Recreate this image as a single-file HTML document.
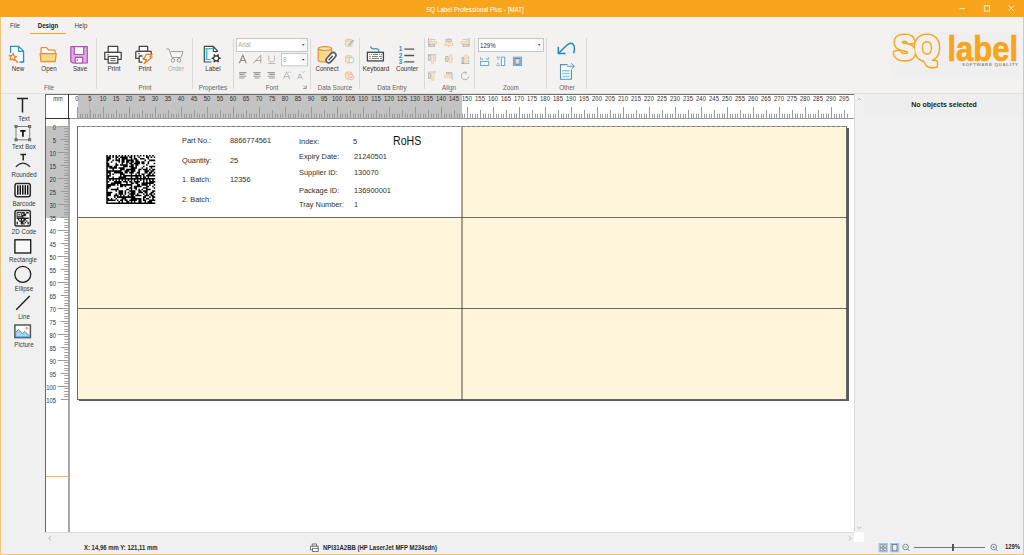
<!DOCTYPE html>
<html><head><meta charset="utf-8"><style>
html,body{margin:0;padding:0;}
body{width:1024px;height:555px;position:relative;overflow:hidden;background:#F0F0F0;font-family:"Liberation Sans",sans-serif;}
.t{position:absolute;white-space:pre;}
svg{overflow:visible}
</style></head><body>
<div style="position:absolute;left:0px;top:0px;width:1024px;height:17px;background:#F9A51B"></div><div class="t" style="left:375.3px;top:4.5px;width:200px;text-align:center;font-size:7.187px;line-height:10px;color:#fff;font-weight:400;transform-origin:50% 50%;transform:scaleX(0.8696);">SQ Label Professional Plus - [MAT]</div><svg style="position:absolute;left:955px;top:2px" width="66" height="14" viewBox="0 0 66 14">
<path d="M4.5 6.6h5.5" stroke="#fff" stroke-width="0.8" fill="none"/>
<rect x="29.3" y="3.8" width="5.3" height="5.3" stroke="#fff" stroke-width="0.8" fill="none"/>
<path d="M53.6 3.6l5.4 5.4M59 3.6l-5.4 5.4" stroke="#fff" stroke-width="0.8" fill="none"/>
</svg><div style="position:absolute;left:0px;top:17px;width:1px;height:538px;background:#F5C27A"></div><div style="position:absolute;left:1023px;top:17px;width:1px;height:538px;background:#F5C27A"></div><div style="position:absolute;left:0px;top:554px;width:1024px;height:1px;background:#F5C27A"></div><div style="position:absolute;left:1px;top:17px;width:1022px;height:76px;background:#F3F2F1"></div><div style="position:absolute;left:1px;top:93px;width:1022px;height:1px;background:#E3E1DF"></div><div class="t" style="left:-84.8px;top:20.6px;width:200px;text-align:center;font-size:7.312px;line-height:10px;color:#444;font-weight:400;transform-origin:50% 50%;transform:scaleX(0.8547);">File</div><div class="t" style="left:-52.1px;top:20.6px;width:200px;text-align:center;font-size:7.196px;line-height:10px;color:#222;font-weight:700;transform-origin:50% 50%;transform:scaleX(0.8547);">Design</div><div class="t" style="left:-19.200000000000003px;top:20.6px;width:200px;text-align:center;font-size:7.312px;line-height:10px;color:#444;font-weight:400;transform-origin:50% 50%;transform:scaleX(0.8547);">Help</div><div style="position:absolute;left:30px;top:32.5px;width:36px;height:1.6px;background:#F9A51B"></div><div style="position:absolute;left:96.0px;top:37.5px;width:1px;height:51px;background:#DCDAD8"></div><div style="position:absolute;left:192.0px;top:37.5px;width:1px;height:51px;background:#DCDAD8"></div><div style="position:absolute;left:233.0px;top:37.5px;width:1px;height:51px;background:#DCDAD8"></div><div style="position:absolute;left:309.8px;top:37.5px;width:1px;height:51px;background:#DCDAD8"></div><div style="position:absolute;left:358.8px;top:37.5px;width:1px;height:51px;background:#DCDAD8"></div><div style="position:absolute;left:424.1px;top:37.5px;width:1px;height:51px;background:#DCDAD8"></div><div style="position:absolute;left:474.1px;top:37.5px;width:1px;height:51px;background:#DCDAD8"></div><div style="position:absolute;left:545.7px;top:37.5px;width:1px;height:51px;background:#DCDAD8"></div><div style="position:absolute;left:585.7px;top:37.5px;width:1px;height:51px;background:#DCDAD8"></div><div class="t" style="left:-82.5px;top:63.8px;width:200px;text-align:center;font-size:7.312px;line-height:10px;color:#333;font-weight:400;transform-origin:50% 50%;transform:scaleX(0.8547);">New</div><div class="t" style="left:-51.3px;top:63.8px;width:200px;text-align:center;font-size:7.312px;line-height:10px;color:#333;font-weight:400;transform-origin:50% 50%;transform:scaleX(0.8547);">Open</div><div class="t" style="left:-20.200000000000003px;top:63.8px;width:200px;text-align:center;font-size:7.312px;line-height:10px;color:#333;font-weight:400;transform-origin:50% 50%;transform:scaleX(0.8547);">Save</div><div class="t" style="left:14px;top:63.8px;width:200px;text-align:center;font-size:7.312px;line-height:10px;color:#333;font-weight:400;transform-origin:50% 50%;transform:scaleX(0.8547);">Print</div><div class="t" style="left:44.80000000000001px;top:63.8px;width:200px;text-align:center;font-size:7.312px;line-height:10px;color:#333;font-weight:400;transform-origin:50% 50%;transform:scaleX(0.8547);">Print</div><div class="t" style="left:75.6px;top:63.8px;width:200px;text-align:center;font-size:7.312px;line-height:10px;color:#ABABAB;font-weight:400;transform-origin:50% 50%;transform:scaleX(0.8547);">Order</div><div class="t" style="left:113.4px;top:63.8px;width:200px;text-align:center;font-size:7.312px;line-height:10px;color:#333;font-weight:400;transform-origin:50% 50%;transform:scaleX(0.8547);">Label</div><div class="t" style="left:227px;top:63.8px;width:200px;text-align:center;font-size:7.312px;line-height:10px;color:#333;font-weight:400;transform-origin:50% 50%;transform:scaleX(0.8547);">Connect</div><div class="t" style="left:276px;top:63.8px;width:200px;text-align:center;font-size:7.312px;line-height:10px;color:#333;font-weight:400;transform-origin:50% 50%;transform:scaleX(0.8547);">Keyboard</div><div class="t" style="left:307px;top:63.8px;width:200px;text-align:center;font-size:7.312px;line-height:10px;color:#333;font-weight:400;transform-origin:50% 50%;transform:scaleX(0.8547);">Counter</div><div class="t" style="left:-50.8px;top:82.8px;width:200px;text-align:center;font-size:7.312px;line-height:10px;color:#666;font-weight:400;transform-origin:50% 50%;transform:scaleX(0.8547);">File</div><div class="t" style="left:44.900000000000006px;top:82.8px;width:200px;text-align:center;font-size:7.312px;line-height:10px;color:#666;font-weight:400;transform-origin:50% 50%;transform:scaleX(0.8547);">Print</div><div class="t" style="left:113px;top:82.8px;width:200px;text-align:center;font-size:7.312px;line-height:10px;color:#666;font-weight:400;transform-origin:50% 50%;transform:scaleX(0.8547);">Properties</div><div class="t" style="left:172px;top:82.8px;width:200px;text-align:center;font-size:7.312px;line-height:10px;color:#666;font-weight:400;transform-origin:50% 50%;transform:scaleX(0.8547);">Font</div><div class="t" style="left:235px;top:82.8px;width:200px;text-align:center;font-size:7.312px;line-height:10px;color:#666;font-weight:400;transform-origin:50% 50%;transform:scaleX(0.8547);">Data Source</div><div class="t" style="left:291.8px;top:82.8px;width:200px;text-align:center;font-size:7.312px;line-height:10px;color:#666;font-weight:400;transform-origin:50% 50%;transform:scaleX(0.8547);">Data Entry</div><div class="t" style="left:349.4px;top:82.8px;width:200px;text-align:center;font-size:7.312px;line-height:10px;color:#666;font-weight:400;transform-origin:50% 50%;transform:scaleX(0.8547);">Align</div><div class="t" style="left:410.8px;top:82.8px;width:200px;text-align:center;font-size:7.312px;line-height:10px;color:#666;font-weight:400;transform-origin:50% 50%;transform:scaleX(0.8547);">Zoom</div><div class="t" style="left:467px;top:82.8px;width:200px;text-align:center;font-size:7.312px;line-height:10px;color:#666;font-weight:400;transform-origin:50% 50%;transform:scaleX(0.8547);">Other</div><div style="position:absolute;left:891px;top:32px;width:128px;height:47px;background:#EFEFEF"></div><svg style="position:absolute;left:891px;top:30px" width="130" height="40" viewBox="0 0 130 40">
<text x="3.2" y="29.3" font-family="Liberation Sans" font-weight="700" font-size="33" fill="#F9A51B" stroke="#F9A51B" stroke-width="5.2" stroke-linejoin="round" textLength="45" lengthAdjust="spacingAndGlyphs">SQ</text>
<text x="3.2" y="29.3" font-family="Liberation Sans" font-weight="700" font-size="33" fill="#F1F0EF" stroke="#F1F0EF" stroke-width="2.2" stroke-linejoin="round" textLength="45" lengthAdjust="spacingAndGlyphs">SQ</text>
<text x="56.4" y="30.9" font-family="Liberation Sans" font-weight="700" font-size="35.7" fill="#F9A51B" stroke="#F9A51B" stroke-width="0.7" textLength="70.6" lengthAdjust="spacingAndGlyphs">label</text>
<text x="71" y="36.3" font-family="Liberation Sans" font-weight="700" font-size="4.4" fill="#8e8e8e" textLength="56" lengthAdjust="spacing">SOFTWARE QUALITY</text>
</svg><div class="t" style="left:-76.5px;top:113.8px;width:200px;text-align:center;font-size:7.254px;line-height:10px;color:#3a3a3a;font-weight:400;transform-origin:50% 50%;transform:scaleX(0.8547);">Text</div><div class="t" style="left:-76.3px;top:142.1px;width:200px;text-align:center;font-size:7.254px;line-height:10px;color:#3a3a3a;font-weight:400;transform-origin:50% 50%;transform:scaleX(0.8547);">Text Box</div><div class="t" style="left:-76.5px;top:170.2px;width:200px;text-align:center;font-size:7.254px;line-height:10px;color:#3a3a3a;font-weight:400;transform-origin:50% 50%;transform:scaleX(0.8547);">Rounded</div><div class="t" style="left:-76.3px;top:198.6px;width:200px;text-align:center;font-size:7.254px;line-height:10px;color:#3a3a3a;font-weight:400;transform-origin:50% 50%;transform:scaleX(0.8547);">Barcode</div><div class="t" style="left:-76.5px;top:226.7px;width:200px;text-align:center;font-size:7.254px;line-height:10px;color:#3a3a3a;font-weight:400;transform-origin:50% 50%;transform:scaleX(0.8547);">2D Code</div><div class="t" style="left:-76.6px;top:254.89999999999998px;width:200px;text-align:center;font-size:7.254px;line-height:10px;color:#3a3a3a;font-weight:400;transform-origin:50% 50%;transform:scaleX(0.8547);">Rectangle</div><div class="t" style="left:-76.3px;top:283.5px;width:200px;text-align:center;font-size:7.254px;line-height:10px;color:#3a3a3a;font-weight:400;transform-origin:50% 50%;transform:scaleX(0.8547);">Ellipse</div><div class="t" style="left:-76.5px;top:311.8px;width:200px;text-align:center;font-size:7.254px;line-height:10px;color:#3a3a3a;font-weight:400;transform-origin:50% 50%;transform:scaleX(0.8547);">Line</div><div class="t" style="left:-76px;top:340.2px;width:200px;text-align:center;font-size:7.254px;line-height:10px;color:#3a3a3a;font-weight:400;transform-origin:50% 50%;transform:scaleX(0.8547);">Picture</div><div style="position:absolute;left:45px;top:94px;width:24px;height:24px;background:#fff;border-top:1px solid #6d6d6d;border-left:1px solid #6d6d6d;box-sizing:border-box"></div><div style="position:absolute;left:68px;top:94px;width:1.5px;height:25px;background:#222"></div><div style="position:absolute;left:45px;top:117.5px;width:24.5px;height:1.5px;background:#222"></div><div class="t" style="left:-42.5px;top:93.8px;width:200px;text-align:center;font-size:6.552px;line-height:10px;color:#333;font-weight:400;transform-origin:50% 50%;transform:scaleX(0.8547);">mm</div><div style="position:absolute;left:69px;top:94px;width:785px;height:24px;background:#fff;border-top:1px solid #6d6d6d;box-sizing:border-box"></div><div style="position:absolute;left:77.5px;top:95px;width:384.8px;height:23px;background:#C3C3C3"></div><div style="position:absolute;left:89.4px;top:95px;width:1.1px;height:23px;background:rgba(240,165,50,0.75)"></div><svg style="position:absolute;left:0px;top:0px" width="1024" height="555" viewBox="0 0 1024 555"><path d="M77.50 107V118M80.50 113.7V118M82.50 113.7V118M85.50 113.7V118M87.50 113.7V118M90.50 110V118M93.50 113.7V118M95.50 113.7V118M98.50 113.7V118M100.50 113.7V118M103.50 107V118M106.50 113.7V118M108.50 113.7V118M111.50 113.7V118M113.50 113.7V118M116.50 110V118M119.50 113.7V118M121.50 113.7V118M124.50 113.7V118M126.50 113.7V118M129.50 107V118M132.50 113.7V118M134.50 113.7V118M137.50 113.7V118M139.50 113.7V118M142.50 110V118M145.50 113.7V118M147.50 113.7V118M150.50 113.7V118M152.50 113.7V118M155.50 107V118M158.50 113.7V118M160.50 113.7V118M163.50 113.7V118M165.50 113.7V118M168.50 110V118M171.50 113.7V118M173.50 113.7V118M176.50 113.7V118M178.50 113.7V118M181.50 107V118M184.50 113.7V118M186.50 113.7V118M189.50 113.7V118M191.50 113.7V118M194.50 110V118M197.50 113.7V118M199.50 113.7V118M202.50 113.7V118M204.50 113.7V118M207.50 107V118M210.50 113.7V118M212.50 113.7V118M215.50 113.7V118M217.50 113.7V118M220.50 110V118M223.50 113.7V118M225.50 113.7V118M228.50 113.7V118M230.50 113.7V118M233.50 107V118M236.50 113.7V118M238.50 113.7V118M241.50 113.7V118M243.50 113.7V118M246.50 110V118M249.50 113.7V118M251.50 113.7V118M254.50 113.7V118M256.50 113.7V118M259.50 107V118M262.50 113.7V118M264.50 113.7V118M267.50 113.7V118M269.50 113.7V118M272.50 110V118M275.50 113.7V118M277.50 113.7V118M280.50 113.7V118M282.50 113.7V118M285.50 107V118M288.50 113.7V118M290.50 113.7V118M293.50 113.7V118M295.50 113.7V118M298.50 110V118M301.50 113.7V118M303.50 113.7V118M306.50 113.7V118M308.50 113.7V118M311.50 107V118M314.50 113.7V118M316.50 113.7V118M319.50 113.7V118M321.50 113.7V118M324.50 110V118M327.50 113.7V118M329.50 113.7V118M332.50 113.7V118M334.50 113.7V118M337.50 107V118M340.50 113.7V118M342.50 113.7V118M345.50 113.7V118M347.50 113.7V118M350.50 110V118M353.50 113.7V118M355.50 113.7V118M358.50 113.7V118M360.50 113.7V118M363.50 107V118M366.50 113.7V118M368.50 113.7V118M371.50 113.7V118M373.50 113.7V118M376.50 110V118M379.50 113.7V118M381.50 113.7V118M384.50 113.7V118M386.50 113.7V118M389.50 107V118M392.50 113.7V118M394.50 113.7V118M397.50 113.7V118M399.50 113.7V118M402.50 110V118M405.50 113.7V118M407.50 113.7V118M410.50 113.7V118M412.50 113.7V118M415.50 107V118M418.50 113.7V118M420.50 113.7V118M423.50 113.7V118M425.50 113.7V118M428.50 110V118M431.50 113.7V118M433.50 113.7V118M436.50 113.7V118M438.50 113.7V118M441.50 107V118M444.50 113.7V118M446.50 113.7V118M449.50 113.7V118M451.50 113.7V118M454.50 110V118M457.50 113.7V118M459.50 113.7V118M462.50 113.7V118M464.50 113.7V118M467.50 107V118M470.50 113.7V118M472.50 113.7V118M475.50 113.7V118M477.50 113.7V118M480.50 110V118M483.50 113.7V118M485.50 113.7V118M488.50 113.7V118M490.50 113.7V118M493.50 107V118M496.50 113.7V118M498.50 113.7V118M501.50 113.7V118M503.50 113.7V118M506.50 110V118M509.50 113.7V118M511.50 113.7V118M514.50 113.7V118M516.50 113.7V118M519.50 107V118M522.50 113.7V118M524.50 113.7V118M527.50 113.7V118M529.50 113.7V118M532.50 110V118M535.50 113.7V118M537.50 113.7V118M540.50 113.7V118M542.50 113.7V118M545.50 107V118M548.50 113.7V118M550.50 113.7V118M553.50 113.7V118M555.50 113.7V118M558.50 110V118M561.50 113.7V118M563.50 113.7V118M566.50 113.7V118M568.50 113.7V118M571.50 107V118M574.50 113.7V118M576.50 113.7V118M579.50 113.7V118M581.50 113.7V118M584.50 110V118M587.50 113.7V118M589.50 113.7V118M592.50 113.7V118M594.50 113.7V118M597.50 107V118M600.50 113.7V118M602.50 113.7V118M605.50 113.7V118M607.50 113.7V118M610.50 110V118M613.50 113.7V118M615.50 113.7V118M618.50 113.7V118M620.50 113.7V118M623.50 107V118M626.50 113.7V118M628.50 113.7V118M631.50 113.7V118M633.50 113.7V118M636.50 110V118M639.50 113.7V118M641.50 113.7V118M644.50 113.7V118M646.50 113.7V118M649.50 107V118M652.50 113.7V118M654.50 113.7V118M657.50 113.7V118M659.50 113.7V118M662.50 110V118M665.50 113.7V118M667.50 113.7V118M670.50 113.7V118M672.50 113.7V118M675.50 107V118M678.50 113.7V118M680.50 113.7V118M683.50 113.7V118M685.50 113.7V118M688.50 110V118M691.50 113.7V118M693.50 113.7V118M696.50 113.7V118M698.50 113.7V118M701.50 107V118M704.50 113.7V118M706.50 113.7V118M709.50 113.7V118M711.50 113.7V118M714.50 110V118M717.50 113.7V118M719.50 113.7V118M722.50 113.7V118M724.50 113.7V118M727.50 107V118M730.50 113.7V118M732.50 113.7V118M735.50 113.7V118M737.50 113.7V118M740.50 110V118M743.50 113.7V118M745.50 113.7V118M748.50 113.7V118M750.50 113.7V118M753.50 107V118M756.50 113.7V118M758.50 113.7V118M761.50 113.7V118M763.50 113.7V118M766.50 110V118M769.50 113.7V118M771.50 113.7V118M774.50 113.7V118M776.50 113.7V118M779.50 107V118M782.50 113.7V118M784.50 113.7V118M787.50 113.7V118M789.50 113.7V118M792.50 110V118M795.50 113.7V118M797.50 113.7V118M800.50 113.7V118M802.50 113.7V118M805.50 107V118M808.50 113.7V118M810.50 113.7V118M813.50 113.7V118M815.50 113.7V118M818.50 110V118M821.50 113.7V118M823.50 113.7V118M826.50 113.7V118M828.50 113.7V118M831.50 107V118M834.50 113.7V118M836.50 113.7V118M839.50 113.7V118M841.50 113.7V118M844.50 110V118M847.50 113.7V118" stroke="#9c9c9c" stroke-width="1" fill="none"/></svg><div style="position:absolute;left:69px;top:117.5px;width:785px;height:1px;background:#9a9a9a"></div><div class="t" style="left:-23.200000000000003px;top:93.6px;width:200px;text-align:center;font-size:6.785px;line-height:10px;color:#333;font-weight:400;transform-origin:50% 50%;transform:scaleX(0.8696);">0</div><div class="t" style="left:-10.200000000000003px;top:93.6px;width:200px;text-align:center;font-size:6.785px;line-height:10px;color:#333;font-weight:400;transform-origin:50% 50%;transform:scaleX(0.8696);">5</div><div class="t" style="left:2.799999999999997px;top:93.6px;width:200px;text-align:center;font-size:6.785px;line-height:10px;color:#333;font-weight:400;transform-origin:50% 50%;transform:scaleX(0.8696);">10</div><div class="t" style="left:15.799999999999997px;top:93.6px;width:200px;text-align:center;font-size:6.785px;line-height:10px;color:#333;font-weight:400;transform-origin:50% 50%;transform:scaleX(0.8696);">15</div><div class="t" style="left:28.80000000000001px;top:93.6px;width:200px;text-align:center;font-size:6.785px;line-height:10px;color:#333;font-weight:400;transform-origin:50% 50%;transform:scaleX(0.8696);">20</div><div class="t" style="left:41.80000000000001px;top:93.6px;width:200px;text-align:center;font-size:6.785px;line-height:10px;color:#333;font-weight:400;transform-origin:50% 50%;transform:scaleX(0.8696);">25</div><div class="t" style="left:54.80000000000001px;top:93.6px;width:200px;text-align:center;font-size:6.785px;line-height:10px;color:#333;font-weight:400;transform-origin:50% 50%;transform:scaleX(0.8696);">30</div><div class="t" style="left:67.80000000000001px;top:93.6px;width:200px;text-align:center;font-size:6.785px;line-height:10px;color:#333;font-weight:400;transform-origin:50% 50%;transform:scaleX(0.8696);">35</div><div class="t" style="left:80.80000000000001px;top:93.6px;width:200px;text-align:center;font-size:6.785px;line-height:10px;color:#333;font-weight:400;transform-origin:50% 50%;transform:scaleX(0.8696);">40</div><div class="t" style="left:93.80000000000001px;top:93.6px;width:200px;text-align:center;font-size:6.785px;line-height:10px;color:#333;font-weight:400;transform-origin:50% 50%;transform:scaleX(0.8696);">45</div><div class="t" style="left:106.80000000000001px;top:93.6px;width:200px;text-align:center;font-size:6.785px;line-height:10px;color:#333;font-weight:400;transform-origin:50% 50%;transform:scaleX(0.8696);">50</div><div class="t" style="left:119.80000000000001px;top:93.6px;width:200px;text-align:center;font-size:6.785px;line-height:10px;color:#333;font-weight:400;transform-origin:50% 50%;transform:scaleX(0.8696);">55</div><div class="t" style="left:132.8px;top:93.6px;width:200px;text-align:center;font-size:6.785px;line-height:10px;color:#333;font-weight:400;transform-origin:50% 50%;transform:scaleX(0.8696);">60</div><div class="t" style="left:145.8px;top:93.6px;width:200px;text-align:center;font-size:6.785px;line-height:10px;color:#333;font-weight:400;transform-origin:50% 50%;transform:scaleX(0.8696);">65</div><div class="t" style="left:158.8px;top:93.6px;width:200px;text-align:center;font-size:6.785px;line-height:10px;color:#333;font-weight:400;transform-origin:50% 50%;transform:scaleX(0.8696);">70</div><div class="t" style="left:171.8px;top:93.6px;width:200px;text-align:center;font-size:6.785px;line-height:10px;color:#333;font-weight:400;transform-origin:50% 50%;transform:scaleX(0.8696);">75</div><div class="t" style="left:184.8px;top:93.6px;width:200px;text-align:center;font-size:6.785px;line-height:10px;color:#333;font-weight:400;transform-origin:50% 50%;transform:scaleX(0.8696);">80</div><div class="t" style="left:197.8px;top:93.6px;width:200px;text-align:center;font-size:6.785px;line-height:10px;color:#333;font-weight:400;transform-origin:50% 50%;transform:scaleX(0.8696);">85</div><div class="t" style="left:210.8px;top:93.6px;width:200px;text-align:center;font-size:6.785px;line-height:10px;color:#333;font-weight:400;transform-origin:50% 50%;transform:scaleX(0.8696);">90</div><div class="t" style="left:223.8px;top:93.6px;width:200px;text-align:center;font-size:6.785px;line-height:10px;color:#333;font-weight:400;transform-origin:50% 50%;transform:scaleX(0.8696);">95</div><div class="t" style="left:236.8px;top:93.6px;width:200px;text-align:center;font-size:6.785px;line-height:10px;color:#333;font-weight:400;transform-origin:50% 50%;transform:scaleX(0.8696);">100</div><div class="t" style="left:249.8px;top:93.6px;width:200px;text-align:center;font-size:6.785px;line-height:10px;color:#333;font-weight:400;transform-origin:50% 50%;transform:scaleX(0.8696);">105</div><div class="t" style="left:262.8px;top:93.6px;width:200px;text-align:center;font-size:6.785px;line-height:10px;color:#333;font-weight:400;transform-origin:50% 50%;transform:scaleX(0.8696);">110</div><div class="t" style="left:275.8px;top:93.6px;width:200px;text-align:center;font-size:6.785px;line-height:10px;color:#333;font-weight:400;transform-origin:50% 50%;transform:scaleX(0.8696);">115</div><div class="t" style="left:288.8px;top:93.6px;width:200px;text-align:center;font-size:6.785px;line-height:10px;color:#333;font-weight:400;transform-origin:50% 50%;transform:scaleX(0.8696);">120</div><div class="t" style="left:301.8px;top:93.6px;width:200px;text-align:center;font-size:6.785px;line-height:10px;color:#333;font-weight:400;transform-origin:50% 50%;transform:scaleX(0.8696);">125</div><div class="t" style="left:314.8px;top:93.6px;width:200px;text-align:center;font-size:6.785px;line-height:10px;color:#333;font-weight:400;transform-origin:50% 50%;transform:scaleX(0.8696);">130</div><div class="t" style="left:327.8px;top:93.6px;width:200px;text-align:center;font-size:6.785px;line-height:10px;color:#333;font-weight:400;transform-origin:50% 50%;transform:scaleX(0.8696);">135</div><div class="t" style="left:340.8px;top:93.6px;width:200px;text-align:center;font-size:6.785px;line-height:10px;color:#333;font-weight:400;transform-origin:50% 50%;transform:scaleX(0.8696);">140</div><div class="t" style="left:353.8px;top:93.6px;width:200px;text-align:center;font-size:6.785px;line-height:10px;color:#333;font-weight:400;transform-origin:50% 50%;transform:scaleX(0.8696);">145</div><div class="t" style="left:366.8px;top:93.6px;width:200px;text-align:center;font-size:6.785px;line-height:10px;color:#333;font-weight:400;transform-origin:50% 50%;transform:scaleX(0.8696);">150</div><div class="t" style="left:379.8px;top:93.6px;width:200px;text-align:center;font-size:6.785px;line-height:10px;color:#333;font-weight:400;transform-origin:50% 50%;transform:scaleX(0.8696);">155</div><div class="t" style="left:392.8px;top:93.6px;width:200px;text-align:center;font-size:6.785px;line-height:10px;color:#333;font-weight:400;transform-origin:50% 50%;transform:scaleX(0.8696);">160</div><div class="t" style="left:405.8px;top:93.6px;width:200px;text-align:center;font-size:6.785px;line-height:10px;color:#333;font-weight:400;transform-origin:50% 50%;transform:scaleX(0.8696);">165</div><div class="t" style="left:418.79999999999995px;top:93.6px;width:200px;text-align:center;font-size:6.785px;line-height:10px;color:#333;font-weight:400;transform-origin:50% 50%;transform:scaleX(0.8696);">170</div><div class="t" style="left:431.79999999999995px;top:93.6px;width:200px;text-align:center;font-size:6.785px;line-height:10px;color:#333;font-weight:400;transform-origin:50% 50%;transform:scaleX(0.8696);">175</div><div class="t" style="left:444.79999999999995px;top:93.6px;width:200px;text-align:center;font-size:6.785px;line-height:10px;color:#333;font-weight:400;transform-origin:50% 50%;transform:scaleX(0.8696);">180</div><div class="t" style="left:457.79999999999995px;top:93.6px;width:200px;text-align:center;font-size:6.785px;line-height:10px;color:#333;font-weight:400;transform-origin:50% 50%;transform:scaleX(0.8696);">185</div><div class="t" style="left:470.79999999999995px;top:93.6px;width:200px;text-align:center;font-size:6.785px;line-height:10px;color:#333;font-weight:400;transform-origin:50% 50%;transform:scaleX(0.8696);">190</div><div class="t" style="left:483.79999999999995px;top:93.6px;width:200px;text-align:center;font-size:6.785px;line-height:10px;color:#333;font-weight:400;transform-origin:50% 50%;transform:scaleX(0.8696);">195</div><div class="t" style="left:496.79999999999995px;top:93.6px;width:200px;text-align:center;font-size:6.785px;line-height:10px;color:#333;font-weight:400;transform-origin:50% 50%;transform:scaleX(0.8696);">200</div><div class="t" style="left:509.79999999999995px;top:93.6px;width:200px;text-align:center;font-size:6.785px;line-height:10px;color:#333;font-weight:400;transform-origin:50% 50%;transform:scaleX(0.8696);">205</div><div class="t" style="left:522.8px;top:93.6px;width:200px;text-align:center;font-size:6.785px;line-height:10px;color:#333;font-weight:400;transform-origin:50% 50%;transform:scaleX(0.8696);">210</div><div class="t" style="left:535.8px;top:93.6px;width:200px;text-align:center;font-size:6.785px;line-height:10px;color:#333;font-weight:400;transform-origin:50% 50%;transform:scaleX(0.8696);">215</div><div class="t" style="left:548.8px;top:93.6px;width:200px;text-align:center;font-size:6.785px;line-height:10px;color:#333;font-weight:400;transform-origin:50% 50%;transform:scaleX(0.8696);">220</div><div class="t" style="left:561.8px;top:93.6px;width:200px;text-align:center;font-size:6.785px;line-height:10px;color:#333;font-weight:400;transform-origin:50% 50%;transform:scaleX(0.8696);">225</div><div class="t" style="left:574.8px;top:93.6px;width:200px;text-align:center;font-size:6.785px;line-height:10px;color:#333;font-weight:400;transform-origin:50% 50%;transform:scaleX(0.8696);">230</div><div class="t" style="left:587.8px;top:93.6px;width:200px;text-align:center;font-size:6.785px;line-height:10px;color:#333;font-weight:400;transform-origin:50% 50%;transform:scaleX(0.8696);">235</div><div class="t" style="left:600.8px;top:93.6px;width:200px;text-align:center;font-size:6.785px;line-height:10px;color:#333;font-weight:400;transform-origin:50% 50%;transform:scaleX(0.8696);">240</div><div class="t" style="left:613.8px;top:93.6px;width:200px;text-align:center;font-size:6.785px;line-height:10px;color:#333;font-weight:400;transform-origin:50% 50%;transform:scaleX(0.8696);">245</div><div class="t" style="left:626.8px;top:93.6px;width:200px;text-align:center;font-size:6.785px;line-height:10px;color:#333;font-weight:400;transform-origin:50% 50%;transform:scaleX(0.8696);">250</div><div class="t" style="left:639.8px;top:93.6px;width:200px;text-align:center;font-size:6.785px;line-height:10px;color:#333;font-weight:400;transform-origin:50% 50%;transform:scaleX(0.8696);">255</div><div class="t" style="left:652.8px;top:93.6px;width:200px;text-align:center;font-size:6.785px;line-height:10px;color:#333;font-weight:400;transform-origin:50% 50%;transform:scaleX(0.8696);">260</div><div class="t" style="left:665.8px;top:93.6px;width:200px;text-align:center;font-size:6.785px;line-height:10px;color:#333;font-weight:400;transform-origin:50% 50%;transform:scaleX(0.8696);">265</div><div class="t" style="left:678.8px;top:93.6px;width:200px;text-align:center;font-size:6.785px;line-height:10px;color:#333;font-weight:400;transform-origin:50% 50%;transform:scaleX(0.8696);">270</div><div class="t" style="left:691.8px;top:93.6px;width:200px;text-align:center;font-size:6.785px;line-height:10px;color:#333;font-weight:400;transform-origin:50% 50%;transform:scaleX(0.8696);">275</div><div class="t" style="left:704.8px;top:93.6px;width:200px;text-align:center;font-size:6.785px;line-height:10px;color:#333;font-weight:400;transform-origin:50% 50%;transform:scaleX(0.8696);">280</div><div class="t" style="left:717.8px;top:93.6px;width:200px;text-align:center;font-size:6.785px;line-height:10px;color:#333;font-weight:400;transform-origin:50% 50%;transform:scaleX(0.8696);">285</div><div class="t" style="left:730.8px;top:93.6px;width:200px;text-align:center;font-size:6.785px;line-height:10px;color:#333;font-weight:400;transform-origin:50% 50%;transform:scaleX(0.8696);">290</div><div class="t" style="left:743.8px;top:93.6px;width:200px;text-align:center;font-size:6.785px;line-height:10px;color:#333;font-weight:400;transform-origin:50% 50%;transform:scaleX(0.8696);">295</div><div style="position:absolute;left:45px;top:118px;width:24px;height:414px;background:#fff"></div><div style="position:absolute;left:45px;top:126.3px;width:24px;height:91.3px;background:#C3C3C3"></div><div style="position:absolute;left:45px;top:118px;width:1.2px;height:414.5px;background:#666"></div><div style="position:absolute;left:68.4px;top:118px;width:1.4px;height:414.5px;background:#A8A8A8"></div><svg style="position:absolute;left:0px;top:0px" width="1024" height="555" viewBox="0 0 1024 555"><path d="M57.6 126.50H69M64.3 128.50H69M64.3 131.50H69M64.3 134.50H69M64.3 136.50H69M60.7 139.50H69M64.3 141.50H69M64.3 144.50H69M64.3 147.50H69M64.3 149.50H69M57.6 152.50H69M64.3 154.50H69M64.3 157.50H69M64.3 160.50H69M64.3 162.50H69M60.7 165.50H69M64.3 167.50H69M64.3 170.50H69M64.3 173.50H69M64.3 175.50H69M57.6 178.50H69M64.3 180.50H69M64.3 183.50H69M64.3 186.50H69M64.3 188.50H69M60.7 191.50H69M64.3 193.50H69M64.3 196.50H69M64.3 199.50H69M64.3 201.50H69M57.6 204.50H69M64.3 206.50H69M64.3 209.50H69M64.3 212.50H69M64.3 214.50H69M60.7 217.50H69M64.3 219.50H69M64.3 222.50H69M64.3 225.50H69M64.3 227.50H69M57.6 230.50H69M64.3 232.50H69M64.3 235.50H69M64.3 238.50H69M64.3 240.50H69M60.7 243.50H69M64.3 245.50H69M64.3 248.50H69M64.3 251.50H69M64.3 253.50H69M57.6 256.50H69M64.3 258.50H69M64.3 261.50H69M64.3 264.50H69M64.3 266.50H69M60.7 269.50H69M64.3 271.50H69M64.3 274.50H69M64.3 277.50H69M64.3 279.50H69M57.6 282.50H69M64.3 284.50H69M64.3 287.50H69M64.3 290.50H69M64.3 292.50H69M60.7 295.50H69M64.3 297.50H69M64.3 300.50H69M64.3 303.50H69M64.3 305.50H69M57.6 308.50H69M64.3 310.50H69M64.3 313.50H69M64.3 316.50H69M64.3 318.50H69M60.7 321.50H69M64.3 323.50H69M64.3 326.50H69M64.3 329.50H69M64.3 331.50H69M57.6 334.50H69M64.3 336.50H69M64.3 339.50H69M64.3 342.50H69M64.3 344.50H69M60.7 347.50H69M64.3 349.50H69M64.3 352.50H69M64.3 355.50H69M64.3 357.50H69M57.6 360.50H69M64.3 362.50H69M64.3 365.50H69M64.3 368.50H69M64.3 370.50H69M60.7 373.50H69M64.3 375.50H69M64.3 378.50H69M64.3 381.50H69M64.3 383.50H69M57.6 386.50H69M64.3 388.50H69M64.3 391.50H69M64.3 394.50H69M64.3 396.50H69M60.7 399.50H69" stroke="#9c9c9c" stroke-width="1" fill="none"/></svg><div class="t" style="left:-144px;top:122.5px;width:200px;text-align:right;font-size:6.785px;line-height:10px;color:#333;font-weight:400;transform-origin:100% 50%;transform:scaleX(0.8696);">0</div><div class="t" style="left:-144px;top:135.5px;width:200px;text-align:right;font-size:6.785px;line-height:10px;color:#333;font-weight:400;transform-origin:100% 50%;transform:scaleX(0.8696);">5</div><div class="t" style="left:-144px;top:148.5px;width:200px;text-align:right;font-size:6.785px;line-height:10px;color:#333;font-weight:400;transform-origin:100% 50%;transform:scaleX(0.8696);">10</div><div class="t" style="left:-144px;top:161.5px;width:200px;text-align:right;font-size:6.785px;line-height:10px;color:#333;font-weight:400;transform-origin:100% 50%;transform:scaleX(0.8696);">15</div><div class="t" style="left:-144px;top:174.5px;width:200px;text-align:right;font-size:6.785px;line-height:10px;color:#333;font-weight:400;transform-origin:100% 50%;transform:scaleX(0.8696);">20</div><div class="t" style="left:-144px;top:187.5px;width:200px;text-align:right;font-size:6.785px;line-height:10px;color:#333;font-weight:400;transform-origin:100% 50%;transform:scaleX(0.8696);">25</div><div class="t" style="left:-144px;top:200.5px;width:200px;text-align:right;font-size:6.785px;line-height:10px;color:#333;font-weight:400;transform-origin:100% 50%;transform:scaleX(0.8696);">30</div><div class="t" style="left:-144px;top:213.5px;width:200px;text-align:right;font-size:6.785px;line-height:10px;color:#333;font-weight:400;transform-origin:100% 50%;transform:scaleX(0.8696);">35</div><div class="t" style="left:-144px;top:226.5px;width:200px;text-align:right;font-size:6.785px;line-height:10px;color:#333;font-weight:400;transform-origin:100% 50%;transform:scaleX(0.8696);">40</div><div class="t" style="left:-144px;top:239.5px;width:200px;text-align:right;font-size:6.785px;line-height:10px;color:#333;font-weight:400;transform-origin:100% 50%;transform:scaleX(0.8696);">45</div><div class="t" style="left:-144px;top:252.5px;width:200px;text-align:right;font-size:6.785px;line-height:10px;color:#333;font-weight:400;transform-origin:100% 50%;transform:scaleX(0.8696);">50</div><div class="t" style="left:-144px;top:265.5px;width:200px;text-align:right;font-size:6.785px;line-height:10px;color:#333;font-weight:400;transform-origin:100% 50%;transform:scaleX(0.8696);">55</div><div class="t" style="left:-144px;top:278.5px;width:200px;text-align:right;font-size:6.785px;line-height:10px;color:#333;font-weight:400;transform-origin:100% 50%;transform:scaleX(0.8696);">60</div><div class="t" style="left:-144px;top:291.5px;width:200px;text-align:right;font-size:6.785px;line-height:10px;color:#333;font-weight:400;transform-origin:100% 50%;transform:scaleX(0.8696);">65</div><div class="t" style="left:-144px;top:304.5px;width:200px;text-align:right;font-size:6.785px;line-height:10px;color:#333;font-weight:400;transform-origin:100% 50%;transform:scaleX(0.8696);">70</div><div class="t" style="left:-144px;top:317.5px;width:200px;text-align:right;font-size:6.785px;line-height:10px;color:#333;font-weight:400;transform-origin:100% 50%;transform:scaleX(0.8696);">75</div><div class="t" style="left:-144px;top:330.5px;width:200px;text-align:right;font-size:6.785px;line-height:10px;color:#333;font-weight:400;transform-origin:100% 50%;transform:scaleX(0.8696);">80</div><div class="t" style="left:-144px;top:343.5px;width:200px;text-align:right;font-size:6.785px;line-height:10px;color:#333;font-weight:400;transform-origin:100% 50%;transform:scaleX(0.8696);">85</div><div class="t" style="left:-144px;top:356.5px;width:200px;text-align:right;font-size:6.785px;line-height:10px;color:#333;font-weight:400;transform-origin:100% 50%;transform:scaleX(0.8696);">90</div><div class="t" style="left:-144px;top:369.5px;width:200px;text-align:right;font-size:6.785px;line-height:10px;color:#333;font-weight:400;transform-origin:100% 50%;transform:scaleX(0.8696);">95</div><div class="t" style="left:-144px;top:382.5px;width:200px;text-align:right;font-size:6.785px;line-height:10px;color:#333;font-weight:400;transform-origin:100% 50%;transform:scaleX(0.8696);">100</div><div class="t" style="left:-144px;top:395.5px;width:200px;text-align:right;font-size:6.785px;line-height:10px;color:#333;font-weight:400;transform-origin:100% 50%;transform:scaleX(0.8696);">105</div><div style="position:absolute;left:46px;top:476px;width:22.5px;height:1px;background:#EDB461"></div><div style="position:absolute;left:68.2px;top:94px;width:1.3px;height:25px;background:#333"></div><div style="position:absolute;left:45px;top:117.6px;width:24.5px;height:1.3px;background:#333"></div><div style="position:absolute;left:70px;top:119px;width:784px;height:413px;background:#fff"></div><div style="position:absolute;left:854px;top:94px;width:1px;height:438px;background:#DCDCDC"></div><div style="position:absolute;left:77.5px;top:126.3px;width:769.6px;height:273.0px;background:#FFF5DA"></div><div style="position:absolute;left:77.5px;top:126.3px;width:384.8px;height:91px;background:#fff"></div><div style="position:absolute;left:77px;top:125.9px;width:770px;height:1.5px;background:repeating-linear-gradient(90deg,#7a7a7a 0 3px,#a8a8a8 3px 5px)"></div><div style="position:absolute;left:77px;top:126px;width:1.3px;height:274px;background:#6a6a6a"></div><div style="position:absolute;left:846.3px;top:126px;width:1.2px;height:274px;background:#666"></div><div style="position:absolute;left:847.3px;top:128px;width:1.4px;height:273.4px;background:#5c5c5c"></div><div style="position:absolute;left:77px;top:399px;width:770.5px;height:1.2px;background:#666"></div><div style="position:absolute;left:79px;top:400px;width:769.7px;height:1.4px;background:#5c5c5c"></div><div style="position:absolute;left:461.2px;top:127px;width:1.8px;height:273px;background:rgba(70,66,55,0.48)"></div><div style="position:absolute;left:78px;top:216.9px;width:769px;height:1.6px;background:rgba(60,60,60,0.75)"></div><div style="position:absolute;left:78px;top:307.9px;width:769px;height:1.6px;background:rgba(60,60,60,0.75)"></div><div class="t" style="left:181.6px;top:136.20000000000002px;font-size:7.844px;line-height:10px;color:#2e2e2e;font-weight:400;transform-origin:0 50%;transform:scaleX(0.9434);">Part No.:</div><div class="t" style="left:229.8px;top:136.20000000000002px;font-size:7.844px;line-height:10px;color:#2e2e2e;font-weight:400;transform-origin:0 50%;transform:scaleX(0.9434);">8866774561</div><div class="t" style="left:181.6px;top:155.60000000000002px;font-size:7.844px;line-height:10px;color:#2e2e2e;font-weight:400;transform-origin:0 50%;transform:scaleX(0.9434);">Quantity:</div><div class="t" style="left:229.8px;top:155.60000000000002px;font-size:7.844px;line-height:10px;color:#2e2e2e;font-weight:400;transform-origin:0 50%;transform:scaleX(0.9434);">25</div><div class="t" style="left:181.6px;top:175.3px;font-size:7.844px;line-height:10px;color:#2e2e2e;font-weight:400;transform-origin:0 50%;transform:scaleX(0.9434);">1. Batch:</div><div class="t" style="left:229.8px;top:175.3px;font-size:7.844px;line-height:10px;color:#2e2e2e;font-weight:400;transform-origin:0 50%;transform:scaleX(0.9434);">12356</div><div class="t" style="left:181.6px;top:194.9px;font-size:7.844px;line-height:10px;color:#2e2e2e;font-weight:400;transform-origin:0 50%;transform:scaleX(0.9434);">2. Batch:</div><div class="t" style="left:298.6px;top:136.70000000000002px;font-size:7.844px;line-height:10px;color:#2e2e2e;font-weight:400;transform-origin:0 50%;transform:scaleX(0.9434);">Index:</div><div class="t" style="left:353.3px;top:136.70000000000002px;font-size:7.844px;line-height:10px;color:#2e2e2e;font-weight:400;transform-origin:0 50%;transform:scaleX(0.9434);">5</div><div class="t" style="left:298.6px;top:152.3px;font-size:7.844px;line-height:10px;color:#2e2e2e;font-weight:400;transform-origin:0 50%;transform:scaleX(0.9434);">Expiry Date:</div><div class="t" style="left:353.6px;top:152.3px;font-size:7.844px;line-height:10px;color:#2e2e2e;font-weight:400;transform-origin:0 50%;transform:scaleX(0.9434);">21240501</div><div class="t" style="left:298.6px;top:168.10000000000002px;font-size:7.844px;line-height:10px;color:#2e2e2e;font-weight:400;transform-origin:0 50%;transform:scaleX(0.9434);">Supplier ID:</div><div class="t" style="left:353.6px;top:168.10000000000002px;font-size:7.844px;line-height:10px;color:#2e2e2e;font-weight:400;transform-origin:0 50%;transform:scaleX(0.9434);">130070</div><div class="t" style="left:298.6px;top:185.5px;font-size:7.844px;line-height:10px;color:#2e2e2e;font-weight:400;transform-origin:0 50%;transform:scaleX(0.9434);">Package ID:</div><div class="t" style="left:353.6px;top:185.5px;font-size:7.844px;line-height:10px;color:#2e2e2e;font-weight:400;transform-origin:0 50%;transform:scaleX(0.9434);">136900001</div><div class="t" style="left:299.4px;top:199.5px;font-size:7.844px;line-height:10px;color:#2e2e2e;font-weight:400;transform-origin:0 50%;transform:scaleX(0.9434);">Tray Number:</div><div class="t" style="left:353.6px;top:199.5px;font-size:7.844px;line-height:10px;color:#2e2e2e;font-weight:400;transform-origin:0 50%;transform:scaleX(0.9434);">1</div><div class="t" style="left:393.3px;top:135.7px;font-size:12.201px;line-height:10px;color:#111;font-weight:400;transform-origin:0 50%;transform:scaleX(0.8696);">RoHS</div><svg style="position:absolute;left:105.8px;top:154.9px" width="49.5" height="49" viewBox="0 0 32 32"><path d="M0 0h1v1h-1zM2 0h1v1h-1zM4 0h1v1h-1zM6 0h1v1h-1zM8 0h1v1h-1zM10 0h1v1h-1zM12 0h1v1h-1zM14 0h1v1h-1zM16 0h1v1h-1zM18 0h1v1h-1zM20 0h1v1h-1zM22 0h1v1h-1zM24 0h1v1h-1zM26 0h1v1h-1zM28 0h1v1h-1zM30 0h1v1h-1zM0 1h3v1h-3zM4 1h1v1h-1zM6 1h2v1h-2zM9 1h5v1h-5zM15 1h2v1h-2zM18 1h1v1h-1zM21 1h1v1h-1zM26 1h2v1h-2zM29 1h1v1h-1zM31 1h1v1h-1zM0 2h3v1h-3zM6 2h1v1h-1zM8 2h1v1h-1zM10 2h4v1h-4zM16 2h1v1h-1zM18 2h2v1h-2zM22 2h3v1h-3zM27 2h1v1h-1zM0 3h2v1h-2zM4 3h1v1h-1zM6 3h3v1h-3zM10 3h2v1h-2zM13 3h5v1h-5zM19 3h2v1h-2zM25 3h1v1h-1zM28 3h4v1h-4zM0 4h1v1h-1zM3 4h1v1h-1zM8 4h1v1h-1zM10 4h2v1h-2zM13 4h2v1h-2zM16 4h2v1h-2zM19 4h3v1h-3zM23 4h2v1h-2zM27 4h1v1h-1zM0 5h2v1h-2zM6 5h1v1h-1zM10 5h1v1h-1zM13 5h1v1h-1zM15 5h2v1h-2zM18 5h4v1h-4zM23 5h2v1h-2zM27 5h1v1h-1zM31 5h1v1h-1zM0 6h2v1h-2zM6 6h2v1h-2zM9 6h5v1h-5zM16 6h2v1h-2zM19 6h2v1h-2zM26 6h1v1h-1zM0 7h4v1h-4zM5 7h2v1h-2zM11 7h3v1h-3zM15 7h3v1h-3zM19 7h1v1h-1zM24 7h1v1h-1zM28 7h4v1h-4zM0 8h1v1h-1zM2 8h5v1h-5zM8 8h4v1h-4zM16 8h4v1h-4zM23 8h1v1h-1zM26 8h1v1h-1zM29 8h1v1h-1zM0 9h1v1h-1zM4 9h1v1h-1zM9 9h3v1h-3zM13 9h6v1h-6zM21 9h2v1h-2zM24 9h3v1h-3zM28 9h1v1h-1zM30 9h2v1h-2zM0 10h10v1h-10zM12 10h3v1h-3zM16 10h3v1h-3zM21 10h1v1h-1zM25 10h3v1h-3zM29 10h2v1h-2zM0 11h3v1h-3zM5 11h6v1h-6zM12 11h2v1h-2zM15 11h3v1h-3zM20 11h2v1h-2zM25 11h2v1h-2zM28 11h2v1h-2zM31 11h1v1h-1zM0 12h1v1h-1zM2 12h1v1h-1zM4 12h1v1h-1zM9 12h3v1h-3zM16 12h1v1h-1zM19 12h1v1h-1zM21 12h1v1h-1zM23 12h2v1h-2zM27 12h2v1h-2zM30 12h1v1h-1zM0 13h3v1h-3zM9 13h1v1h-1zM11 13h12v1h-12zM24 13h1v1h-1zM26 13h6v1h-6zM0 14h2v1h-2zM4 14h1v1h-1zM8 14h5v1h-5zM16 14h1v1h-1zM19 14h2v1h-2zM22 14h1v1h-1zM24 14h2v1h-2zM27 14h1v1h-1zM0 15h32v1h-32zM0 16h1v1h-1zM2 16h1v1h-1zM4 16h1v1h-1zM6 16h1v1h-1zM8 16h1v1h-1zM10 16h1v1h-1zM12 16h1v1h-1zM14 16h1v1h-1zM16 16h1v1h-1zM18 16h1v1h-1zM20 16h1v1h-1zM22 16h1v1h-1zM24 16h1v1h-1zM26 16h1v1h-1zM28 16h1v1h-1zM30 16h1v1h-1zM0 17h2v1h-2zM5 17h5v1h-5zM11 17h3v1h-3zM15 17h2v1h-2zM18 17h4v1h-4zM24 17h1v1h-1zM26 17h1v1h-1zM28 17h4v1h-4zM0 18h1v1h-1zM3 18h7v1h-7zM13 18h1v1h-1zM16 18h2v1h-2zM19 18h2v1h-2zM23 18h8v1h-8zM0 19h6v1h-6zM7 19h1v1h-1zM9 19h8v1h-8zM20 19h2v1h-2zM23 19h4v1h-4zM28 19h1v1h-1zM31 19h1v1h-1zM0 20h3v1h-3zM9 20h2v1h-2zM12 20h1v1h-1zM16 20h1v1h-1zM18 20h5v1h-5zM26 20h2v1h-2zM30 20h1v1h-1zM0 21h2v1h-2zM7 21h1v1h-1zM15 21h2v1h-2zM18 21h2v1h-2zM24 21h3v1h-3zM31 21h1v1h-1zM0 22h1v1h-1zM3 22h5v1h-5zM13 22h2v1h-2zM16 22h1v1h-1zM19 22h1v1h-1zM21 22h1v1h-1zM23 22h1v1h-1zM26 22h3v1h-3zM0 23h1v1h-1zM6 23h1v1h-1zM8 23h3v1h-3zM12 23h1v1h-1zM15 23h4v1h-4zM21 23h2v1h-2zM24 23h3v1h-3zM30 23h2v1h-2zM0 24h4v1h-4zM8 24h3v1h-3zM12 24h1v1h-1zM14 24h1v1h-1zM16 24h3v1h-3zM21 24h3v1h-3zM25 24h2v1h-2zM29 24h2v1h-2zM0 25h3v1h-3zM6 25h1v1h-1zM8 25h3v1h-3zM12 25h1v1h-1zM15 25h4v1h-4zM20 25h1v1h-1zM24 25h1v1h-1zM26 25h1v1h-1zM28 25h2v1h-2zM31 25h1v1h-1zM0 26h3v1h-3zM5 26h3v1h-3zM9 26h1v1h-1zM11 26h1v1h-1zM14 26h1v1h-1zM16 26h2v1h-2zM19 26h4v1h-4zM25 26h3v1h-3zM29 26h2v1h-2zM0 27h1v1h-1zM5 27h1v1h-1zM7 27h12v1h-12zM24 27h2v1h-2zM28 27h1v1h-1zM30 27h2v1h-2zM0 28h2v1h-2zM3 28h1v1h-1zM6 28h1v1h-1zM10 28h3v1h-3zM16 28h7v1h-7zM24 28h1v1h-1zM26 28h2v1h-2zM30 28h1v1h-1zM0 29h6v1h-6zM7 29h1v1h-1zM9 29h2v1h-2zM12 29h2v1h-2zM15 29h5v1h-5zM21 29h2v1h-2zM24 29h2v1h-2zM28 29h4v1h-4zM0 30h1v1h-1zM8 30h1v1h-1zM10 30h1v1h-1zM13 30h2v1h-2zM16 30h1v1h-1zM18 30h1v1h-1zM21 30h2v1h-2zM25 30h1v1h-1zM27 30h3v1h-3zM0 31h32v1h-32z" fill="#000"/></svg><div style="position:absolute;left:45px;top:532px;width:809px;height:12px;background:#F0F0F0"></div><div style="position:absolute;left:45px;top:532px;width:810px;height:1px;background:#DCDCDC"></div><div style="position:absolute;left:854px;top:532px;width:9.5px;height:10px;background:#fff"></div><div style="position:absolute;left:864px;top:94px;width:159px;height:19.5px;background:#EEEEEE"></div><div class="t" style="left:843.7px;top:99.5px;width:200px;text-align:center;font-size:8.050px;line-height:10px;color:#222;font-weight:700;transform-origin:50% 50%;transform:scaleX(0.8696);">No objects selected</div><div class="t" style="left:83.5px;top:542.9px;font-size:6.985px;line-height:10px;color:#2a2a2a;font-weight:700;transform-origin:0 50%;transform:scaleX(0.8547);">X: 14,96 mm Y: 121,11 mm</div><div class="t" style="left:322.5px;top:542.8px;font-size:6.985px;line-height:10px;color:#2a2a2a;font-weight:700;transform-origin:0 50%;transform:scaleX(0.8547);">NPI31A2BB (HP LaserJet MFP M234sdn)</div><div class="t" style="left:1004.6px;top:542.2px;font-size:7.080px;line-height:10px;color:#2a2a2a;font-weight:700;transform-origin:0 50%;transform:scaleX(0.8333);">129%</div><div style="position:absolute;left:914px;top:547px;width:70.7px;height:0.8px;background:#777"></div><div style="position:absolute;left:951.8px;top:544px;width:2px;height:7px;background:#555"></div><svg style="position:absolute;left:0px;top:0px" width="1024" height="555" viewBox="0 0 1024 555"><g transform="translate(6,42)" fill="none" stroke="#2D8ED6" stroke-width="1.3"><path d="M4.6 11V4.3H12.5L17.6 9.3V20H13.5" fill="#fff"/><path d="M12.5 4.3V9.3H17.6"/><path d="M4.6 11L4.6 20H13.5" stroke="none" fill="#fff"/></g><polygon points="13.28,53.36 13.89,55.95 16.46,56.66 14.19,58.05 14.31,60.71 12.29,58.97 9.79,59.91 10.82,57.45 9.16,55.37 11.81,55.58" fill="#fff" stroke="#EE8230" stroke-width="1.2" stroke-linejoin="round"/><path d="M14.6 59.3L17.9 62.8" stroke="#EE8230" stroke-width="1.4"/><g transform="translate(36,42)" stroke="#EE8A3A" stroke-width="1.25" stroke-linejoin="round"><path d="M5 11.5V6.2Q5 5.5 5.7 5.5H10.3L12.6 8H18.4Q19.1 8 19.1 8.7V11.5" fill="#fff"/><path d="M4.1 11.6H20.2L19.2 19.6H5.1Z" fill="#F6D88B"/></g><g transform="translate(67,42)" stroke="#B14FB9" stroke-width="1.2" stroke-linejoin="round"><path d="M3.8 4.7H20.3V21H5.6L3.8 19.3Z" fill="#DFADE2"/><rect x="7.3" y="4.7" width="9.4" height="7.8" fill="#fff"/><rect x="8.3" y="15.3" width="7.3" height="5.7" fill="#fff"/><path d="M10.3 17.3V19" stroke="#444" stroke-width="0.9"/></g><g transform="translate(101,42)" stroke="#454545" stroke-width="1.3" stroke-linejoin="round" fill="#fff"><rect x="7.2" y="4.4" width="9.6" height="6"/><rect x="3.8" y="10.4" width="16.4" height="7"/><rect x="7.2" y="14.4" width="9.6" height="6.8"/><path d="M9.3 16.5H14.7M9.3 18.7H14.7" stroke-width="0.9"/><path d="M6 12.6H7.8" stroke="#2D8ED6" stroke-width="1.1"/></g><g transform="translate(132,42)" stroke="#454545" stroke-width="1.3" stroke-linejoin="round" fill="#fff"><rect x="7.2" y="4.4" width="8.4" height="5"/><path d="M3.8 9.4H19.2V12M11.5 16.4H3.8V9.4"/><path d="M10.5 14H7.2V20.1H10.5"/><path d="M6 11.6H7.8" stroke="#2D8ED6" stroke-width="1.1"/></g><path d="M146.4 54.3H152.3L149.6 57H152.3L144.2 63.6L146.7 59.5H143.6Z" fill="#fff" stroke="#EE7F22" stroke-width="1.2" stroke-linejoin="round"/><g transform="translate(163,42)" stroke="#9C9C9C" stroke-width="1" fill="none" stroke-linejoin="round"><path d="M3.4 7H5.9L9 15.6H18L20 9.6H7.9" fill="#F7F7F7"/><circle cx="9.9" cy="18.3" r="1.8"/><circle cx="16" cy="18.3" r="1.8"/></g><g transform="translate(201,42)" stroke-linejoin="round"><path d="M10.5 20H3.3V4.4H12.3L16.8 9.5" fill="#fff" stroke="#444" stroke-width="1.2"/><path d="M12.3 4.4V9.5H16.8" fill="none" stroke="#444" stroke-width="1.1"/><path d="M4.4 6.6H12M4.4 17.6H9.8" stroke="#3CC0D9" stroke-width="1.3"/><path d="M5.6 6.4V18" stroke="#3CC0D9" stroke-width="1.8"/><path d="M14.4 10.4L15.2 11" stroke="#3CC0D9" stroke-width="1.2"/></g><polygon points="219.40,57.50 220.74,57.58 220.74,59.02 219.40,59.10 218.49,60.67 219.09,61.87 217.85,62.59 217.11,61.47 215.29,61.47 214.55,62.59 213.31,61.87 213.91,60.67 213.00,59.10 211.66,59.02 211.66,57.58 213.00,57.50 213.91,55.93 213.31,54.73 214.55,54.01 215.29,55.13 217.11,55.13 217.85,54.01 219.09,54.73 218.49,55.93" fill="#333"/><circle cx="216.2" cy="58.3" r="1.9" fill="#fff"/><g transform="translate(314,42)" stroke="#EE8A3A" stroke-width="1.2"><path d="M4.2 6.6V18.2Q4.2 20 10.9 20Q17.6 20 17.6 18.2V6.6" fill="#F7D98D"/><ellipse cx="10.9" cy="6.6" rx="6.7" ry="1.9" fill="#F9E4B0"/></g><g transform="translate(331,57.6) rotate(-48)"><rect x="-6" y="-2.7" width="12" height="5.4" rx="2.7" fill="#fff" stroke="#5a5a5a" stroke-width="1.6"/><path d="M-3.5 0H2.5" stroke="#555" stroke-width="1.5"/></g><g transform="translate(345,38.5)" stroke="#F2C08A" stroke-width="1"><path d="M0.6 1.7V6.8Q0.6 7.8 3.8 7.8Q7 7.8 7 6.8V1.7" fill="#F9E6C2"/><ellipse cx="3.8" cy="1.7" rx="3.2" ry="1" fill="#FBEBD0"/></g><g transform="translate(345,55)" stroke="#F2C08A" stroke-width="1"><path d="M0.6 1.7V6.8Q0.6 7.8 3.8 7.8Q7 7.8 7 6.8V1.7" fill="#F9E6C2"/><ellipse cx="3.8" cy="1.7" rx="3.2" ry="1" fill="#FBEBD0"/></g><g transform="translate(345,71.3)" stroke="#F2C08A" stroke-width="1"><path d="M0.6 1.7V6.8Q0.6 7.8 3.8 7.8Q7 7.8 7 6.8V1.7" fill="#F9E6C2"/><ellipse cx="3.8" cy="1.7" rx="3.2" ry="1" fill="#FBEBD0"/></g><path d="M348.5 45.3L353.7 40.2" stroke="#8FC1E8" stroke-width="1.8"/><path d="M353.6 59.3A2.4 2.4 0 1 1 352.3 58" fill="#fff" stroke="#9ED9E4" stroke-width="1.1"/><path d="M352 57L353.6 58.2L352.3 59.6" fill="none" stroke="#9ED9E4" stroke-width="0.9"/><circle cx="351.2" cy="77.2" r="2.6" fill="#fff" stroke="#F4AAB4" stroke-width="1"/><path d="M349.7 77.2H352.7" stroke="#F09AA6" stroke-width="1.2"/><g transform="translate(363,42)"><rect x="4.4" y="10.3" width="16" height="8.6" fill="#fff" stroke="#444" stroke-width="1.3"/><path d="M6.2 12.4h1M8 12.4h1M10 12.4h5M16 12.4h1M18 12.4h1.2M6.2 14.4h1.6M9 14.4h6M16.2 14.4h2.8M6.2 16.4h1.4M8.6 16.4h7.4M17 16.4h2" stroke="#666" stroke-width="0.9"/><path d="M7.5 4.4Q8.3 7.3 11 6.9Q15.8 5.6 16 10.2" fill="none" stroke="#3A93D3" stroke-width="1.3"/></g><g transform="translate(395,42)"><path d="M9.3 7.1H19.2M9.3 13.5H19.2M9.3 19.8H19.2" stroke="#555" stroke-width="1.3"/><text x="5.6" y="9.2" font-family="Liberation Sans" font-weight="700" font-size="6.4" fill="#2B8BD2" text-anchor="middle">1</text><text x="5.6" y="15.6" font-family="Liberation Sans" font-weight="700" font-size="6.4" fill="#2B8BD2" text-anchor="middle">2</text><text x="5.6" y="21.9" font-family="Liberation Sans" font-weight="700" font-size="6.4" fill="#2B8BD2" text-anchor="middle">3</text></g><rect x="236.5" y="38.5" width="71" height="13" fill="#fff" stroke="#C6C6C6" stroke-width="1"/><rect x="299.5" y="39" width="7.5" height="12" fill="#F7F7F7"/><path d="M301.8 44.3H304.6L303.2 45.8Z" fill="#333"/><rect x="281.5" y="53.5" width="26" height="12.3" fill="#fff" stroke="#C6C6C6" stroke-width="1"/><rect x="299.5" y="54" width="7.5" height="11.3" fill="#F7F7F7"/><path d="M301.8 58.9H304.6L303.2 60.4Z" fill="#333"/><path d="M239.3 63.3L242.8 55.2L246.3 63.3M240.6 60.5H245" fill="none" stroke="#8C8C8C" stroke-width="1.2"/><path d="M253.3 63.3L260.8 55.2V63.3M255.6 60.6H260.8" fill="none" stroke="#9A9A9A" stroke-width="0.9"/><path d="M268.8 55.5V60.3Q268.8 62 271.7 62Q274.6 62 274.6 60.3V55.5M268.3 63.5H275.2" fill="none" stroke="#B4B4B4" stroke-width="0.9"/><path d="M239.2 72.6H246.4M239.2 74.4H244.6M239.2 76.2H246.4M239.2 78H244.6" stroke="#9E9E9E" stroke-width="1.1"/><path d="M253.3 72.6H260.7M254.4 74.4H259.6M253.3 76.2H260.7M254.4 78H259.6" stroke="#9E9E9E" stroke-width="1.1"/><path d="M267.5 72.6H274.9M269.3 74.4H274.9M267.5 76.2H274.9M269.3 78H274.9" stroke="#9E9E9E" stroke-width="1.1"/><path d="M283.3 79.3L286.6 71.8L289.9 79.3M284.5 76.6H288.7" fill="none" stroke="#A8A8A8" stroke-width="0.8"/><path d="M288.4 72.9L289.6 71.7L290.8 72.9" fill="none" stroke="#8FC4EA" stroke-width="0.8"/><path d="M297.3 79.3L299.9 73.8L302.5 79.3M298.3 77.3H301.5" fill="none" stroke="#A8A8A8" stroke-width="0.8"/><path d="M302.2 71.4L303.4 72.6L304.6 71.4" fill="none" stroke="#8FC4EA" stroke-width="0.8"/><path d="M303.3 88.5H306.3V85.5" fill="none" stroke="#777" stroke-width="0.8"/><path d="M303.5 85.7L305.5 87.7" stroke="#777" stroke-width="0.7"/><path d="M428.7 38V46.8" stroke="#B0B0B0" stroke-width="1"/><rect x="429.2" y="41.4" width="7.6" height="2.4" fill="#FBE3C2" stroke="#F8CFA0" stroke-width="0.8"/><rect x="429.2" y="44.6" width="5.5" height="1.8" fill="#ddd" stroke="#B0B0B0" stroke-width="0.7"/><path d="M430.5 39.6H435.5M431.7 38.6L430.6 39.6L431.7 40.6" fill="none" stroke="#9CC8EC" stroke-width="0.8"/><path d="M448.8 38V47" stroke="#B0B0B0" stroke-width="0.8"/><rect x="446" y="39.2" width="5.5" height="2.2" fill="#ddd" stroke="#B0B0B0" stroke-width="0.7"/><rect x="444.8" y="43" width="8" height="2.6" fill="#FBE3C2" stroke="#F8CFA0" stroke-width="0.8"/><path d="M469 38V46.8" stroke="#B0B0B0" stroke-width="1"/><rect x="461" y="41.4" width="7.6" height="2.4" fill="#FBE3C2" stroke="#F8CFA0" stroke-width="0.8"/><rect x="463" y="44.6" width="5.5" height="1.8" fill="#ddd" stroke="#B0B0B0" stroke-width="0.7"/><path d="M462.3 39.6H467.3M466.1 38.6L467.2 39.6L466.1 40.6" fill="none" stroke="#9CC8EC" stroke-width="0.8"/><path d="M428 54.9H436.3" stroke="#B0B0B0" stroke-width="1"/><rect x="428.4" y="55.6" width="1.8" height="5" fill="#ddd" stroke="#B0B0B0" stroke-width="0.7"/><rect x="431.3" y="55.6" width="2.4" height="7.6" fill="#FBE3C2" stroke="#F8CFA0" stroke-width="0.8"/><path d="M435.2 56.5V61.5M434.2 57.6L435.2 56.5L436.2 57.6" fill="none" stroke="#9CC8EC" stroke-width="0.8"/><path d="M444.5 59H453" stroke="#B0B0B0" stroke-width="0.8"/><rect x="445.8" y="56.4" width="2.2" height="5.2" fill="#ddd" stroke="#B0B0B0" stroke-width="0.7"/><rect x="449.3" y="54.9" width="2.6" height="8" fill="#FBE3C2" stroke="#F8CFA0" stroke-width="0.8"/><path d="M461.3 63.5H469.6" stroke="#B0B0B0" stroke-width="1"/><rect x="462" y="57.3" width="1.8" height="5.6" fill="#ddd" stroke="#B0B0B0" stroke-width="0.7"/><rect x="464.8" y="55" width="2.4" height="8" fill="#FBE3C2" stroke="#F8CFA0" stroke-width="0.8"/><path d="M468.6 56V62M467.6 61L468.6 62L469.6 61" fill="none" stroke="#9CC8EC" stroke-width="0.8"/><rect x="428.6" y="73" width="1.8" height="5.5" fill="#ddd" stroke="#B0B0B0" stroke-width="0.7"/><rect x="431.5" y="73.2" width="2.4" height="7" fill="#FBE3C2" stroke="#F8CFA0" stroke-width="0.8"/><path d="M428.5 72H435.5M434.6 71L435.6 72L434.6 73" fill="none" stroke="#9CC8EC" stroke-width="0.8"/><rect x="446.5" y="72.3" width="5" height="1.8" fill="#ddd" stroke="#B0B0B0" stroke-width="0.7"/><rect x="444.8" y="75.2" width="6.6" height="2.4" fill="#FBE3C2" stroke="#F8CFA0" stroke-width="0.8"/><path d="M452.3 73V79.5M451.3 78.5L452.3 79.5L453.3 78.5" fill="none" stroke="#9CC8EC" stroke-width="0.8"/><path d="M468.6 76.6A3.6 3.6 0 1 1 466 72.6" fill="none" stroke="#A8A8A8" stroke-width="0.9"/><path d="M465.3 71.3L466.7 72.6L465.3 73.9" fill="none" stroke="#A8A8A8" stroke-width="0.8"/><rect x="478.5" y="38.5" width="65" height="13" fill="#fff" stroke="#C6C6C6" stroke-width="1"/><rect x="535.5" y="39" width="7.5" height="12" fill="#F7F7F7"/><path d="M537.8 44.3H540.6L539.2 45.8Z" fill="#333"/><g stroke="#5FAAE0" stroke-width="1" fill="#fff"><rect x="480.5" y="61.5" width="8.2" height="4"/><rect x="501.4" y="57.2" width="3.3" height="8.3"/></g><path d="M480.6 57V59.8M488.6 57V59.8M496.3 57.2H500M496.3 65.4H500" stroke="#999" stroke-width="0.8"/><path d="M481.4 59.1H483M486.2 59.1H487.8M498.1 58.2V59.8M498.1 62.8V64.5" stroke="#5FAAE0" stroke-width="1.1"/><rect x="513.4" y="57.2" width="8.2" height="8.3" fill="#A8D2EE" stroke="#5FAAE0" stroke-width="1"/><rect x="515" y="58.6" width="5" height="5.6" fill="#ddd" stroke="#777" stroke-width="0.9"/><path d="M558.6 53.2L566.5 45.5Q571.6 41.3 573.8 45.3Q575.2 48.3 573.6 53.3M558.3 46.7V53.6H565.6" fill="none" stroke="#1F89C9" stroke-width="1.5" stroke-linejoin="round"/><path d="M567.6 64.6H560.5V79.2H571.4V69.8" fill="#fff" stroke="#5F8FAD" stroke-width="1.1"/><path d="M562.3 70.8H569.6M562.3 73.6H569.6M562.3 76.5H569.6" stroke="#7FCBEE" stroke-width="1.5"/><path d="M567 66.3H574.3M571.2 63.3L574.3 66.3L571.2 69.3" fill="none" stroke="#4F9ED6" stroke-width="1"/><path d="M17 98.4H28M22.5 98.4V112.6" stroke="#222" stroke-width="1.5"/><path d="M16 126.5H29.7V139.8H16Z" fill="none" stroke="#666" stroke-width="0.8"/><rect x="14.9" y="125.4" width="2.2" height="2.2" fill="#888" stroke="#555" stroke-width="0.7"/><rect x="28.599999999999998" y="125.4" width="2.2" height="2.2" fill="#888" stroke="#555" stroke-width="0.7"/><rect x="14.9" y="138.70000000000002" width="2.2" height="2.2" fill="#888" stroke="#555" stroke-width="0.7"/><rect x="28.599999999999998" y="138.70000000000002" width="2.2" height="2.2" fill="#888" stroke="#555" stroke-width="0.7"/><path d="M20.2 130.8H25.6M22.9 130.8V136.7" stroke="#111" stroke-width="1.7"/><path d="M20.4 154.6H26M23.2 154.6V160.6" stroke="#222" stroke-width="1.5"/><path d="M15.8 166.8Q23 159.4 30.2 166.8" fill="none" stroke="#333" stroke-width="1.1"/><rect x="15" y="183.4" width="15.3" height="13.3" rx="2.2" fill="#fff" stroke="#2a2a2a" stroke-width="1.5"/><path d="M17.8 185.3V194.8M20.3 185.3V194.8M22.8 185.3V194.8M25.3 185.3V194.8M27.7 185.3V194.8" stroke="#111" stroke-width="1.5"/><rect x="15" y="210.5" width="15.3" height="15.5" rx="1.5" fill="#fff" stroke="#2a2a2a" stroke-width="1.5"/><path d="M22.00 212.10h1.35v1.38h-1.35zM23.35 212.10h1.35v1.38h-1.35zM26.05 212.10h1.35v1.38h-1.35zM27.40 212.10h1.35v1.38h-1.35zM23.35 213.48h1.35v1.38h-1.35zM24.70 213.48h1.35v1.38h-1.35zM22.00 214.86h1.35v1.38h-1.35zM23.35 214.86h1.35v1.38h-1.35zM24.70 214.86h1.35v1.38h-1.35zM22.00 216.24h1.35v1.38h-1.35zM16.60 217.62h1.35v1.38h-1.35zM17.95 217.62h1.35v1.38h-1.35zM19.30 217.62h1.35v1.38h-1.35zM20.65 217.62h1.35v1.38h-1.35zM22.00 217.62h1.35v1.38h-1.35zM23.35 217.62h1.35v1.38h-1.35zM24.70 217.62h1.35v1.38h-1.35zM26.05 217.62h1.35v1.38h-1.35zM27.40 217.62h1.35v1.38h-1.35zM17.95 219.00h1.35v1.38h-1.35zM20.65 219.00h1.35v1.38h-1.35zM23.35 219.00h1.35v1.38h-1.35zM24.70 219.00h1.35v1.38h-1.35zM19.30 220.38h1.35v1.38h-1.35zM20.65 220.38h1.35v1.38h-1.35zM22.00 220.38h1.35v1.38h-1.35zM23.35 220.38h1.35v1.38h-1.35zM26.05 220.38h1.35v1.38h-1.35zM16.60 221.76h1.35v1.38h-1.35zM20.65 221.76h1.35v1.38h-1.35zM22.00 221.76h1.35v1.38h-1.35zM24.70 221.76h1.35v1.38h-1.35zM27.40 221.76h1.35v1.38h-1.35zM16.60 223.14h1.35v1.38h-1.35zM20.65 223.14h1.35v1.38h-1.35zM22.00 223.14h1.35v1.38h-1.35zM23.35 223.14h1.35v1.38h-1.35zM27.40 223.14h1.35v1.38h-1.35z" fill="#222"/><rect x="17.1" y="212.6" width="4.2" height="4.2" fill="none" stroke="#222" stroke-width="1"/><rect x="18.5" y="214" width="1.4" height="1.4" fill="#222"/><rect x="14.9" y="239.8" width="15.8" height="13.2" fill="#F8F8F8" stroke="#222" stroke-width="1.4"/><circle cx="22.8" cy="274.3" r="8" fill="none" stroke="#222" stroke-width="1.3"/><path d="M16.2 309.7L29.7 296" stroke="#222" stroke-width="1.4"/><rect x="14.9" y="325" width="15.5" height="12.6" fill="#fff" stroke="#555" stroke-width="1.5"/><path d="M15.6 332.3L18.3 329.7L22.4 333.7L24.8 331.4L30 336.6V337H15.6Z" fill="#A9D5F2" stroke="#3A8FD0" stroke-width="1"/><circle cx="26.8" cy="328.2" r="1.5" fill="#F5A040" stroke="#fff" stroke-width="0.4"/><path d="M857.3 100.4L859.3 98.4L861.3 100.4" fill="none" stroke="#AAA" stroke-width="0.8"/><path d="M857.3 526.6L859.3 528.6L861.3 526.6" fill="none" stroke="#AAA" stroke-width="0.8"/><path d="M50.8 536.2L48.8 538.2L50.8 540.2" fill="none" stroke="#AAA" stroke-width="0.8"/><path d="M849 536.2L851 538.2L849 540.2" fill="none" stroke="#AAA" stroke-width="0.8"/><g stroke="#555" stroke-width="0.8" fill="#fff"><rect x="312.2" y="544" width="4.2" height="2.2"/><rect x="310.6" y="546.2" width="7.5" height="3.6"/><rect x="312.6" y="548.3" width="5.5" height="3.3"/></g><rect x="878.5" y="543" width="9.3" height="9.3" fill="#9ECBEB"/><path d="M880.3 544.8h2.4v2.4h-2.4zM883.8 544.8h2.4v2.4h-2.4zM880.3 548.2h2.4v2.4h-2.4zM883.8 548.2h2.4v2.4h-2.4z" fill="#fff" stroke="#666" stroke-width="0.6"/><rect x="890" y="543" width="9.3" height="9.3" fill="#9ECBEB"/><rect x="892.3" y="544.6" width="4.7" height="6.2" fill="#eee" stroke="#666" stroke-width="0.7"/><circle cx="905.6" cy="547" r="2.8" fill="#fff" stroke="#777" stroke-width="0.9"/><path d="M904.2 547H907" stroke="#3C9BE0" stroke-width="0.9"/><path d="M907.6 549L909.6 551" stroke="#777" stroke-width="0.9"/><circle cx="993.7" cy="547" r="2.8" fill="#fff" stroke="#777" stroke-width="0.9"/><path d="M992.3 547H995.1M993.7 545.6V548.4" stroke="#3C9BE0" stroke-width="0.9"/><path d="M995.7 549L997.7 551" stroke="#777" stroke-width="0.9"/></svg><div class="t" style="left:238px;top:40.1px;font-size:7.245px;line-height:10px;color:#A8A8A8;font-weight:400;transform-origin:0 50%;transform:scaleX(0.8696);">Arial</div><div class="t" style="left:282.8px;top:54.6px;font-size:7.245px;line-height:10px;color:#A8A8A8;font-weight:400;transform-origin:0 50%;transform:scaleX(0.8696);">8</div><div class="t" style="left:479.6px;top:40.5px;font-size:7.015px;line-height:10px;color:#333;font-weight:400;transform-origin:0 50%;transform:scaleX(0.8696);">129%</div>
</body></html>
